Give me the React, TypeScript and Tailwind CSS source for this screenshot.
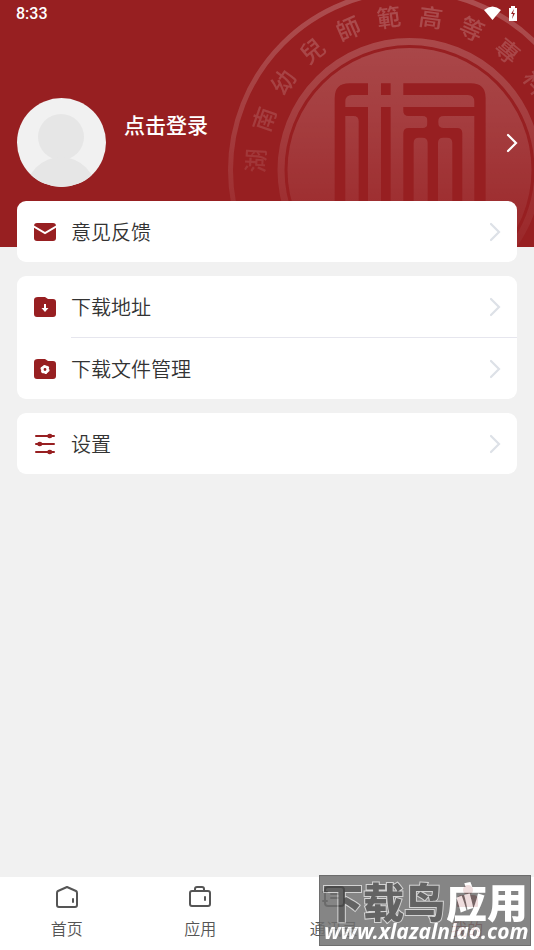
import type { ReactNode } from 'react';

const sealText = ['湖', '南', '幼', '兒', '師', '範', '高', '等', '專', '科', '學', '校'];

function Seal() {
  return (
    <svg className="absolute right-0 top-0 h-full w-[314px]" viewBox="220 0 314 247" aria-hidden="true">
      <defs>
        <linearGradient id="fade" gradientUnits="userSpaceOnUse" x1="0" y1="0" x2="0" y2="260">
          <stop offset="0" stopColor="#fff" stopOpacity="0.21" />
          <stop offset="0.45" stopColor="#fff" stopOpacity="0.14" />
          <stop offset="1" stopColor="#fff" stopOpacity="0.03" />
        </linearGradient>
        <mask id="emblem" maskUnits="userSpaceOnUse" x="200" y="-20" width="420" height="400">
          <g fill="none" stroke="#fff">
            <circle cx="409.5" cy="170" r="179" strokeWidth="5" />
            <circle cx="409.5" cy="170" r="128.5" strokeWidth="7" />
          </g>
          <circle cx="409.5" cy="170" r="122" fill="#fff" />
          <g transform="translate(220 0) scale(0.3333)" fill="#000">
            <path d="M344 900V294Q344 250 388 250H444V285H396Q376 285 376 305V321H444V900H416V364Q416 348 400 348H376V900Z" />
            <path d="M483 250H512V285H483ZM483 321H512V900H483Z" />
            <path d="M550 250H753Q797 250 797 294V900H763V348H672Q654 348 654 366Q654 384 672 384H711Q727 384 727 400V900H697V429Q697 413 681 413H670Q654 413 654 429V900H623V429Q623 413 607 413H597Q581 413 581 429V900H550V400Q550 384 566 384H607Q623 384 623 368V364Q623 348 607 348H566Q550 348 550 334V321H763V305Q763 285 743 285H550Z" />
            <path d="M622 346H655V386H622Z" />
          </g>
          <g fill="#fff" fontSize="24" fontWeight="500" textAnchor="middle" className="font-['Noto_Sans_CJK_TC',sans-serif]">
            {sealText.map((c, i) => (
              <text key={c} x="409.5" y="25" transform={`rotate(${-86.5 + i * 15.75} 409.5 170)`}>{c}</text>
            ))}
          </g>
        </mask>
      </defs>
      <rect x="200" y="-20" width="420" height="400" fill="url(#fade)" mask="url(#emblem)" />
    </svg>
  );
}

function Chevron({ className }: { className: string }) {
  return (
    <svg className={`h-5 w-3 shrink-0 ${className}`} viewBox="0 0 12 20" fill="none" stroke="currentColor" strokeWidth="2.200" strokeLinecap="round" aria-hidden="true">
      <path d="M2 2L10 10L2 18" />
    </svg>
  );
}

const folder = 'M4 1H11L14 3H19Q22 3 22 6V18Q22 21 19 21H3Q0 21 0 18V4Q0 1 4 1Z';

const MailIcon = (
  <>
    <rect y="2" width="22" height="18" rx="3" fill="#971f21" />
    <path d="M-1 5L11 12L23 5" fill="none" stroke="#fff" strokeWidth="2" />
  </>
);
const DownloadIcon = (
  <>
    <path d={folder} fill="#971f21" />
    <path d="M11 8V13" stroke="#fff" strokeWidth="2" />
    <path d="M7.500 12H14.500L11 16Z" fill="#fff" />
  </>
);
const FolderGearIcon = (
  <>
    <path d={folder} fill="#971f21" />
    <circle cx="11" cy="11.500" r="2.700" fill="none" stroke="#fff" strokeWidth="2.600" />
    <circle cx="11" cy="11.500" r="4" fill="none" stroke="#fff" strokeWidth="1.200" strokeDasharray="2.100 2.090" />
  </>
);
const SlidersIcon = (
  <g stroke="#971f21" strokeWidth="2" strokeLinecap="round">
    <path d="M2 3H20M2 11H20M2 19H20" />
    <path d="M15.500 3H16M5.500 11H6M15.500 19H16" strokeWidth="4.500" />
  </g>
);

function Row({ icon, label, divided }: { icon: ReactNode; label: string; divided?: boolean }) {
  return (
    <button type="button" className="flex w-full items-center pl-[17px] text-left">
      <svg className="mr-[15px] h-[22px] w-[22px] shrink-0" viewBox="0 0 22 22" aria-hidden="true">{icon}</svg>
      <span className={`flex flex-1 items-center justify-between pr-4 text-xl font-[350] text-[#333] ${divided ? 'h-[62px] border-b border-[#e6e6ee]' : 'h-[61px]'}`}>
        {label}
        <Chevron className="text-[#dde1e7]" />
      </span>
    </button>
  );
}

function Tab({ icon, label, active }: { icon: ReactNode; label: string; active?: boolean }) {
  return (
    <button type="button" className={`flex flex-1 flex-col items-center pt-2 ${active ? 'text-[#971f21]' : 'text-[#555]'}`}>
      <svg className="h-6 w-6" viewBox="0 0 24 24" fill="none" stroke="currentColor" strokeWidth="2" strokeLinejoin="round" strokeLinecap="round" aria-hidden="true">{icon}</svg>
      <span className="mt-[7px] text-base font-[350] leading-6">{label}</span>
    </button>
  );
}

export default function App() {
  return (
    <div className="relative flex min-h-screen flex-col bg-[#f1f1f1] font-['Noto_Sans_CJK_SC',sans-serif]">
      <header className="relative h-[247px] overflow-hidden bg-[#971f21] text-white">
        <Seal />
        <div className="relative flex h-7 items-center justify-between px-4 font-[Roboto,sans-serif] text-base font-medium">
          <span>8:33</span>
          <svg className="h-4 w-[34px]" viewBox="0 0 34 16" fill="#fff" aria-hidden="true">
            <path d="M0 4Q8.500 -3 17 4L8.500 14Z" />
            <path d="M25 2H27V0H31V2H33V15H25Z" />
            <path d="M30 3L27 8H29L28 13L31 7H29Z" fill="#971f21" />
          </svg>
        </div>
        <button type="button" className="relative mt-[70px] flex w-full items-center px-4 text-left">
          <svg className="ml-px h-[89px] w-[89px]" viewBox="0 0 89 89" role="img" aria-label="头像">
            <defs><clipPath id="avatar"><circle cx="44.500" cy="44.500" r="44.500" /></clipPath></defs>
            <g clipPath="url(#avatar)">
              <path d="M0 0H89V89H0Z" fill="#f1f1f1" />
              <circle cx="44" cy="39" r="23" fill="#e6e6e6" />
              <circle cx="44" cy="94" r="35" fill="#e6e6e6" />
            </g>
          </svg>
          <span className="mb-9 ml-[18px] flex-1 text-[21px] font-medium">点击登录</span>
          <Chevron className="text-white" />
        </button>
      </header>

      <main className="relative -mt-[46px] flex flex-1 flex-col gap-[14px] px-[17px]">
        <section className="rounded-[9px] bg-white"><Row icon={MailIcon} label="意见反馈" /></section>
        <section className="rounded-[9px] bg-white">
          <Row icon={DownloadIcon} label="下载地址" divided />
          <Row icon={FolderGearIcon} label="下载文件管理" />
        </section>
        <section className="rounded-[9px] bg-white"><Row icon={SlidersIcon} label="设置" /></section>
      </main>

      <nav className="flex h-[73px] bg-white">
        <Tab label="首页" icon={<><path d="M12 2L21 6Q22 6.500 22 8V20Q22 22 20 22H4Q2 22 2 20V8Q2 6.500 3 6Z" /><path d="M18 14V17" /></>} />
        <Tab label="应用" icon={<><rect x="2" y="6" width="20" height="15" rx="2" /><path d="M7 6V4Q7 2 9 2H14Q16 2 16 4V6M17 12V15" /></>} />
        <Tab label="通讯录" icon={<><rect x="3" y="2" width="19" height="19" rx="3" /><path d="M1 7H5M1 16H5M9 9H16M9 13H16" /></>} />
        <Tab label="我的" active icon={<g fill="currentColor"><circle cx="13" cy="5" r="4" /><path d="M3 21V15Q3 11 7 11H18Q22 11 22 15V21Z" /></g>} />
      </nav>

      <div className="pointer-events-none absolute bottom-1 right-[3px] h-[71px] w-[212px] border border-[#555] bg-[#707070] text-white opacity-85">
        <svg className="h-full w-full overflow-visible" viewBox="0 0 210 69">
          <g className="font-['Noto_Sans_CJK_SC',sans-serif]" fontSize="41" fontWeight="900">
            <text x="2" y="42" fill="#484848" stroke="#ccc" strokeWidth="2" paintOrder="stroke">下载鸟</text>
            <text x="126" y="42" fill="#fff">应用</text>
          </g>
          <text x="4" y="63" fill="#fff" fontSize="21" fontWeight="700" fontStyle="italic" className="font-['Noto_Sans',sans-serif]">www.xlazalnlao.com</text>
        </svg>
      </div>
    </div>
  );
}
